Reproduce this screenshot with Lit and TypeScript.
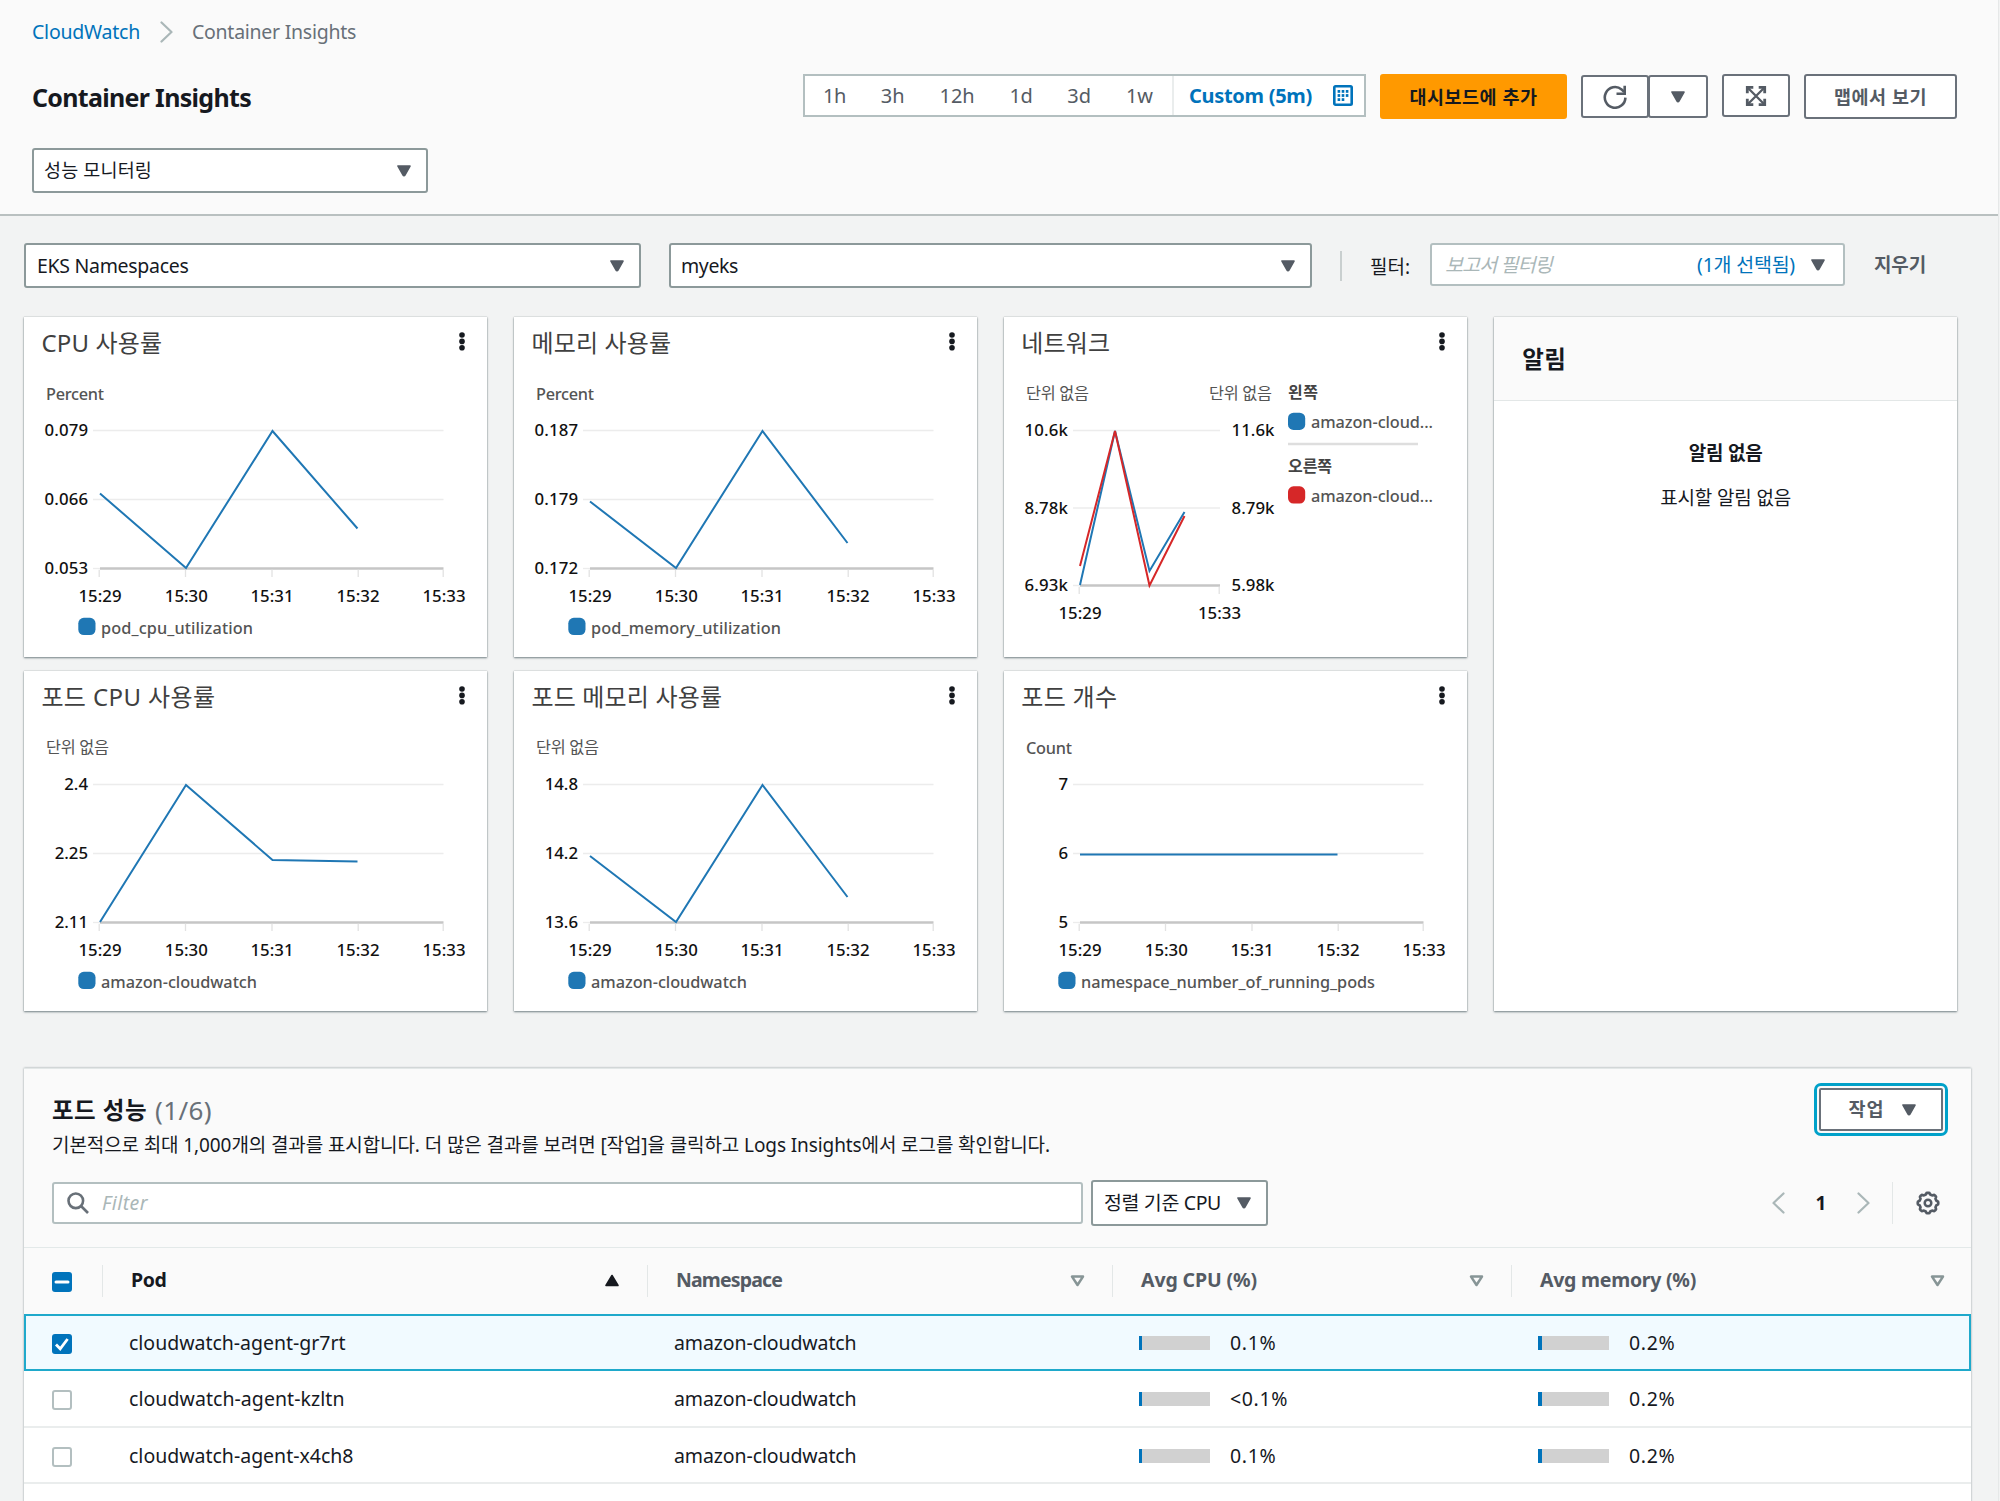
import {LitElement, html, svg, css, nothing} from "lit";
import {customElement, property} from "lit/decorators.js";
import {classMap} from "lit/directives/class-map.js";

/** One line of text whose tracking is adjusted so that it fills `w` pixels. */
@customElement("fit-text")
export class FitText extends LitElement {
  static styles = css`
    :host { display: inline-block; white-space: nowrap; flex: none; }
  `;
  @property() text = "";
  @property({type: Number}) w = 0;
  protected updated() {
    if (!this.w) return;
    const el = this.renderRoot.querySelector("span")!;
    el.style.letterSpacing = "0px";
    const natural = el.getBoundingClientRect().width;
    const gaps = this.text.length;
    el.style.letterSpacing = `${((this.w - natural) / gaps).toFixed(3)}px`;
  }
  render() {
    return html`<span>${this.text}</span>`;
  }
}

const t = (text: string, w = 0) => html`<fit-text .text=${text} .w=${w}></fit-text>`;

const caret = html`<svg class="caret" width="14" height="12" viewBox="0 0 14 12"><path d="M1 1h12L7.9 10.2a1 1 0 0 1-1.8 0z" fill="#545b64" stroke="#545b64" stroke-width="1.6" stroke-linejoin="round"/></svg>`;
const sortUp = html`<svg width="16" height="13" viewBox="0 0 16 13"><path d="M8 1.5l6 10H2z" fill="#16191f" stroke="#16191f" stroke-width="1.6" stroke-linejoin="round"/></svg>`;
const sortDown = html`<svg width="15" height="12" viewBox="0 0 15 12"><path d="M2 1.6h11L7.5 10z" fill="none" stroke="#879596" stroke-width="2.5" stroke-linejoin="round"/></svg>`;
const chevron = (d: string, w: number) => html`<svg width="13" height="22" viewBox="0 0 13 22"><path d=${d} fill="none" stroke="#aab7b8" stroke-width=${w} stroke-linecap="round" stroke-linejoin="round"/></svg>`;
const right = "M1.5 1.5L11.5 11L1.5 20.5";
const left = "M11.5 1.5L1.5 11L11.5 20.5";

const gearPath = (() => {
  const pts: string[] = [];
  for (let i = 0; i < 96; i++) {
    const a = (i / 96) * Math.PI * 2;
    const r = 9.4 + 0.85 * Math.tanh(2.2 * Math.cos(8 * a));
    pts.push(`${(12 + r * Math.cos(a)).toFixed(2)} ${(12 + r * Math.sin(a)).toFixed(2)}`);
  }
  return `M${pts.join("L")}Z`;
})();

type Pt = [number, number];
interface Series { color: string; points: Pt[]; }
interface Chart {
  title: string; titleW: number; unit: string; unitW: number;
  labels: string[]; series: Series[]; legend?: string; legendW?: number; dual?: string[];
}

const BLUE = "#1f77b4";
const RED = "#d62728";
const one = (ys: number[]): Series[] => [{color: BLUE, points: ys.map((y, i) => [76 + [0, 86, 172.5, 257.5][i], y] as Pt)}];

const charts: Chart[] = [
  {title: "CPU 사용률", titleW: 121, unit: "Percent", unitW: 58, labels: ["0.079", "0.066", "0.053"], series: one([176.5, 251, 114, 211.5]), legend: "pod_cpu_utilization", legendW: 152},
  {title: "메모리 사용률", titleW: 140, unit: "Percent", unitW: 58, labels: ["0.187", "0.179", "0.172"], series: one([184.5, 251, 114, 226]), legend: "pod_memory_utilization", legendW: 190},
  {
    title: "네트워크", titleW: 89, unit: "단위 없음", unitW: 63, labels: ["10.6k", "8.78k", "6.93k"], dual: ["11.6k", "8.79k", "5.98k"],
    series: [
      {color: BLUE, points: [[76, 268], [111, 114], [145.5, 254], [180.5, 195]]},
      {color: RED, points: [[76, 249], [111, 114], [145.5, 268.5], [180.5, 199]]},
    ],
  },
  {title: "포드 CPU 사용률", titleW: 174, unit: "단위 없음", unitW: 63, labels: ["2.4", "2.25", "2.11"], series: one([251, 114, 189, 190.5]), legend: "amazon-cloudwatch", legendW: 156},
  {title: "포드 메모리 사용률", titleW: 191, unit: "단위 없음", unitW: 63, labels: ["14.8", "14.2", "13.6"], series: one([185, 251, 114, 226]), legend: "amazon-cloudwatch", legendW: 156},
  {title: "포드 개수", titleW: 96, unit: "Count", unitW: 46, labels: ["7", "6", "5"], series: one([183.5, 183.5, 183.5, 183.5]), legend: "namespace_number_of_running_pods", legendW: 294},
];

@customElement("metric-card")
export class MetricCard extends LitElement {
  static styles = css`
    :host { display: flex; flex-direction: column; background: #fff; height: 340px; box-sizing: border-box;
      box-shadow: 0 1px 2px 0 rgba(0, 28, 36, 0.5), 0 0 1px 0 rgba(0, 28, 36, 0.3); }
    .head { display: flex; justify-content: space-between; align-items: center; height: 50px; padding: 0 22px 0 17px;
      font-size: 24px; line-height: 30px; color: #404040; }
    .head fit-text { margin-top: 2px; }
    .head svg { display: block; }
    .plot { display: block; }
    text { font-family: "Noto Sans", "Noto Sans CJK KR", sans-serif; font-size: 16.8px; font-weight: 500; fill: #111; }
    .muted { fill: #545454; font-size: 16.3px; }
    .ko { font-weight: 400; }
    .strong { fill: #444; font-size: 16px; font-weight: 700; }
  `;
  @property({attribute: false}) chart!: Chart;

  render() {
    const c = this.chart;
    const korean = c.unit === "단위 없음";
    const end = c.dual ? 216 : 419.5;
    const ys = c.dual ? [113.5, 191, 268.5] : [113.5, 182.5, 251.5];
    const base = ys[2];
    const ticks: [string, number, number][] = c.dual
      ? [["15:29", 75.2, 76], ["15:33", 215.2, 215.5]]
      : [["15:29", 75.2, 76], ["15:30", 161.5, 162.3], ["15:31", 248, 248], ["15:32", 334.2, 334], ["15:33", 419.2, 420]];
    return html`
      <div class="head">
        ${t(c.title, c.titleW)}
        <svg width="6" height="20" viewBox="0 0 6 20"><g fill="#16191f"><circle cx="3" cy="3" r="2.8"/><circle cx="3" cy="9.4" r="2.8"/><circle cx="3" cy="15.8" r="2.8"/></g></svg>
      </div>
      <svg class="plot" width="463" height="290" viewBox="0 50 463 290">
        <text class="muted ${korean ? "ko" : ""}" x="22" y=${korean ? 81.8 : 83} textLength=${c.unitW}>${c.unit}</text>
        ${ys.map((y, i) => svg`
          <line x1="69" x2=${i < 2 ? end : 76} y1=${y} y2=${y} stroke="#ececec" stroke-width="1.4"/>
          <text x="64" y=${y + 5.9} text-anchor="end" textLength=${c.labels[i].length === 5 ? 43.5 : nothing}>${c.labels[i]}</text>`)}
        <line x1="76" x2=${end} y1=${base} y2=${base} stroke="#c6c6c6" stroke-width="2.4"/>
        ${ticks.map(([label, x, cx]) => svg`
          <line x1=${x} x2=${x} y1=${base + 1.2} y2=${base + 8.5} stroke="#e2e2e2" stroke-width="1.3"/>
          <text x=${cx} y=${base + 33} text-anchor="middle" textLength="43">${label}</text>`)}
        ${c.series.map((s) => svg`<polyline points=${s.points.map((p) => p.join(",")).join(" ")} fill="none" stroke=${s.color} stroke-width="2"/>`)}
        ${c.legend ? svg`
          <rect x="54.3" y="300.8" width="17.2" height="17.2" rx="5.5" fill=${BLUE}/>
          <text class="muted" x="77" y="316.5" textLength=${c.legendW ?? nothing}>${c.legend}</text>` : nothing}
        ${c.dual ? svg`
          <text class="muted ko" x="268" y="81.8" text-anchor="end" textLength="63">단위 없음</text>
          ${ys.map((y, i) => svg`<text x="270.5" y=${y + 5.9} text-anchor="end" textLength="43">${c.dual![i]}</text>`)}
          <text class="strong" x="284" y="80.5" textLength="30">왼쪽</text>
          <rect x="284" y="95.7" width="17.2" height="17.2" rx="5.5" fill=${BLUE}/>
          <text class="muted" x="307" y="111" textLength="122">amazon-cloud...</text>
          <line x1="284" x2="414" y1="127" y2="127" stroke="#dedede" stroke-width="2.4"/>
          <text class="strong" x="284" y="154.5" textLength="44">오른쪽</text>
          <rect x="284" y="169.3" width="17.2" height="17.2" rx="5.5" fill=${RED}/>
          <text class="muted" x="307" y="184.8" textLength="122">amazon-cloud...</text>` : nothing}
      </svg>`;
  }
}

interface PodRow { pod: string; w: number; cpu: string; cpuW: number; cpuBar: number; selected: boolean; }
const rows: PodRow[] = [
  {pod: "cloudwatch-agent-gr7rt", w: 216.5, cpu: "0.1%", cpuW: 46.5, cpuBar: 2.5, selected: true},
  {pod: "cloudwatch-agent-kzltn", w: 215.5, cpu: "<0.1%", cpuW: 58, cpuBar: 2.5, selected: false},
  {pod: "cloudwatch-agent-x4ch8", w: 224.5, cpu: "0.1%", cpuW: 46.5, cpuBar: 2.5, selected: false},
];

@customElement("app-root")
export class AppRoot extends LitElement {
  static styles = css`
    :host { display: block; height: 1501px; overflow: hidden; background: #f2f3f3; color: #16191f;
      font-family: "Noto Sans", "Noto Sans CJK KR", sans-serif; font-size: 19.5px; line-height: 28px; }
    * { box-sizing: border-box; }
    svg { display: block; flex: none; }
    .page { width: 1999px; height: 1501px; border-right: 1px solid #e6e8e8; overflow: hidden; }
    .top { height: 216px; background: #fafafa; border-bottom: 2px solid #b9c0c0; padding: 0 41px 0 32px; }
    .crumbs { display: flex; align-items: center; gap: 19.5px; height: 64px; color: #687078; font-size: 19.5px; }
    .link { color: #0073bb; }
    .bar { display: flex; align-items: flex-start; margin-top: 10px; height: 45px; }
    .title { flex: 1; font-size: 25px; font-weight: 700; line-height: 46px; }
    .box { display: flex; align-items: center; background: #fff; border: 2px solid #8c999a; border-radius: 3px; height: 45px; }
    .select { justify-content: space-between; padding: 0 15px 0 11px; }
    .select.view { width: 396px; margin-top: 29px; font-size: 18.5px; padding-left: 10px; }
    .view fit-text { margin-top: -2px; }
    .range { display: flex; align-items: center; height: 43px; width: 563px; background: #fff; border: 2px solid #b3bfc0; color: #545b64; font-size: 20px; }
    .ranges { display: flex; align-items: center; gap: 34.8px; height: 100%; width: 369px; padding-left: 18px; border-right: 2px solid #eaeded; }
    .custom { display: flex; align-items: center; flex: 1; justify-content: space-between; padding: 0 11px 0 15px; color: #0073bb; font-weight: 700; }
    .btn { display: flex; align-items: center; justify-content: center; background: #fff; border: 2px solid #6a717a; border-radius: 3px; color: #545b64; font-weight: 700; font-size: 18.5px; height: 45px; }
    .primary { width: 187px; margin-left: 14px; background: #ff9900; border-color: #ff9900; color: #16191f; }
    .refresh { width: 68px; height: 43px; margin: 1px 0 0 14px; }
    .more { width: 60px; height: 43px; margin: 1px 0 0 -1px; }
    .expand { width: 68px; height: 43px; margin-left: 14px; }
    .map { width: 153px; margin-left: 14px; }
    .filters { display: flex; align-items: center; height: 45px; margin: 27px 0 0 24px; }
    .kind { width: 617px; }
    .cluster { width: 643px; margin-left: 28px; }
    .cluster.select { padding-left: 10px; }
    .rule { width: 2px; height: 30px; background: #c9cfcf; margin-left: 28px; }
    .flabel { margin: 2px 0 0 28px; width: 60px; font-size: 19px; }
    .report { width: 415px; height: 43px; border-color: #b3bfc0; padding: 0 18px 0 13px; margin-top: -2px; }
    .report fit-text { margin-top: -2px; }
    .report .link { margin-left: auto; margin-right: 16px; display: block; }
    .ph { color: #aab7b8; font-style: italic; }
    .clear { margin: -1px 0 0 29px; color: #545b64; font-weight: 700; font-size: 19px; }
    .grid { display: grid; grid-template-columns: repeat(4, 462.6px); grid-template-rows: 340px 340px; gap: 14px 27.4px; margin: 29px 0 0 24.4px; }
    .alarms { grid-column: 4; grid-row: 1 / 3; background: #fff; text-align: center;
      box-shadow: 0 1px 2px 0 rgba(0, 28, 36, 0.5), 0 0 1px 0 rgba(0, 28, 36, 0.3); }
    .alarms h2 { margin: 0 0 38px; height: 84px; background: #fafafa; border-bottom: 1px solid #e3e7e7; padding: 0 28px; text-align: left; font-size: 23.5px; line-height: 84px; }
    .alarms p { margin: 0 0 17px; font-size: 19px; }
    .alarms .none { font-weight: 700; }
    .panel { margin: 57px 0 0 24px; width: 1947px; height: 440px; background: #fff; border-top: 1px solid #e3e7e7; box-shadow: 0 0 2px 0 rgba(0, 28, 36, 0.4); }
    .phead { height: 179px; background: #fafafa; border-bottom: 1px solid #e3e9e9; padding: 18px 0 0 28px; }
    .prow { display: flex; justify-content: space-between; align-items: flex-start; height: 62px; }
    .ptitle { display: flex; gap: 8px; font-size: 23.5px; font-weight: 700; line-height: 30px; padding-top: 8px; }
    .ptitle .count { font-weight: 400; color: #687078; font-size: 26px; }
    .desc { margin-top: 6px; line-height: 28px; font-size: 19px; }
    .action { width: 124px; height: 43px; gap: 17px; margin: 1px 28px 0 0; outline: 3px solid #00a1c9; outline-offset: 2px; border-radius: 2px; padding-left: 2px; }
    .action fit-text { margin-top: -1px; }
    .tools { display: flex; align-items: center; height: 46px; margin-top: 31px; padding-right: 31px; }
    .search { width: 1031px; height: 42px; border-color: #b3bfc0; padding-left: 13px; gap: 13px; }
    .sort { width: 177px; height: 46px; margin-left: 8px; }
    .sort.select { padding: 0 15px 0 11px; }
    .sort fit-text { margin-top: -1px; }
    .pager { display: flex; align-items: center; margin: -1px 0 0 auto; font-weight: 700; font-size: 19px; }
    .pager .num { width: 72px; text-align: center; }
    .pager .sep { width: 1px; height: 42px; background: #e3e7e7; margin: 0 23px 0 22px; }
    .row { display: grid; grid-template-columns: 78px 545px 465px 399px 460px; align-items: center; height: 56.5px; border-bottom: 2px solid #eaeded; padding-top: 2px; }
    .row.head { height: 66px; background: #fafafa; font-weight: 700; color: #545b64; border: 0; padding: 0 0 1px; }
    .row.head fit-text { margin-top: -1px; }
    .row.on { background: #f1faff; border: 2px solid #1fa9cb; height: 57px; grid-template-columns: 76px 545px 465px 399px 458px; padding-top: 1px; }
    .row.on .check { padding-left: 26px; }
    .check { padding: 2px 0 0 28px; }
    .cell { padding-left: 27px; display: flex; align-items: center; }
    .head .cell { height: 32px; border-left: 1px solid #e3e7e7; padding: 0 27px 0 28px; justify-content: space-between; }
    .head .cell.last { padding-right: 26px; }
    .active { color: #16191f; }
    .meter { width: 71px; height: 14px; background: #d1d1d1; margin-right: 20px; }
    .fill { height: 14px; background: #0073bb; }
    .cbx { display: block; width: 20px; height: 20px; border: 2px solid #b3bfc0; border-radius: 3px; background: #fff; }
    .cbx.full { border: 0; background: #0073bb; }
  `;

  private checkbox(kind: "none" | "some" | "all") {
    return html`<span class=${classMap({cbx: true, full: kind !== "none"})}>
      ${kind === "some" ? html`<svg width="20" height="20"><path d="M4 10h12" stroke="#fff" stroke-width="3" stroke-linecap="round"/></svg>` : nothing}
      ${kind === "all" ? html`<svg width="20" height="20"><path d="M4 10.5l4.2 4.3L15.6 5" fill="none" stroke="#fff" stroke-width="2.8"/></svg>` : nothing}
    </span>`;
  }

  private meter(w: number) {
    return html`<div class="meter"><div class="fill" style="width:${w}px"></div></div>`;
  }

  private header() {
    const ranges: [string, number][] = [["1h", 23], ["3h", 24], ["12h", 35], ["1d", 23], ["3d", 24], ["1w", 27]];
    return html`
      <header class="top">
        <nav class="crumbs"><span class="link">${t("CloudWatch", 108)}</span>${chevron(right, 2.2)}${t("Container Insights", 164)}</nav>
        <div class="bar">
          <div class="title">${t("Container Insights", 219)}</div>
          <div class="range">
            <div class="ranges">${ranges.map(([l, w]) => t(l, w))}</div>
            <div class="custom">${t("Custom (5m)", 123)}
              <svg width="20" height="21" viewBox="0 0 20 21"><rect x="1.3" y="1.3" width="17.4" height="18.4" rx="1.2" fill="#fff" stroke="#0073bb" stroke-width="2.6"/>
                <g fill="#0073bb">${[4.6, 8.7, 12.8].map((y, r) => [4.6, 8.7, 12.8].map((x, c) => r === 2 && c === 2 ? nothing : svg`<rect x=${x} y=${y + 0.4} width="2.6" height="2.8"/>`))}</g></svg>
            </div>
          </div>
          <div class="btn primary">${t("대시보드에 추가", 128)}</div>
          <div class="btn refresh"><svg width="24" height="24" viewBox="0 0 24 24"><g fill="none" stroke="#545b64" stroke-width="2.6"><path d="M22.4 12.6A10.3 10.3 0 1 1 18.6 4.4L21 6.8"/><path d="M21.7 0.8v8h-8.2"/></g></svg></div>
          <div class="btn more">${caret}</div>
          <div class="btn expand"><svg width="22" height="22" viewBox="0 0 22 22"><g fill="none" stroke="#545b64" stroke-width="2.8"><path d="M2.3 8.3V2.3h6M13.7 2.3h6v6M19.7 13.7v6h-6M8.3 19.7h-6v-6"/><path d="M3 3l16 16M19 3L3 19" stroke-width="2.3"/></g></svg></div>
          <div class="btn map">${t("맵에서 보기", 93)}</div>
        </div>
        <div class="box select view">${t("성능 모니터링", 108)}${caret}</div>
      </header>`;
  }

  render() {
    return html`
      <div class="page">
        ${this.header()}
        <div class="filters">
          <div class="box select kind">${t("EKS Namespaces", 151.5)}${caret}</div>
          <div class="box select cluster">${t("myeks", 57)}${caret}</div>
          <div class="rule"></div>
          <div class="flabel">${t("필터:", 40)}</div>
          <div class="box report"><span class="ph">${t("보고서 필터링", 107)}</span><span class="link">${t("(1개 선택됨)", 98)}</span>${caret}</div>
          <div class="clear">${t("지우기", 52)}</div>
        </div>
        <main class="grid">
          ${charts.map((c) => html`<metric-card .chart=${c}></metric-card>`)}
          <section class="alarms">
            <h2>${t("알림", 44)}</h2>
            <p class="none">${t("알림 없음", 74)}</p>
            <p>${t("표시할 알림 없음", 131)}</p>
          </section>
        </main>
        <section class="panel">
          <div class="phead">
            <div class="prow">
              <div>
                <div class="ptitle">${t("포드 성능", 95)}<span class="count">${t("(1/6)", 57)}</span></div>
                <div class="desc">${t("기본적으로 최대 1,000개의 결과를 표시합니다. 더 많은 결과를 보려면 [작업]을 클릭하고 Logs Insights에서 로그를 확인합니다.", 998)}</div>
              </div>
              <div class="btn action">${t("작업", 36)}${caret}</div>
            </div>
            <div class="tools">
              <div class="box search">
                <svg width="22" height="22" viewBox="0 0 22 22"><g fill="none" stroke="#687078" stroke-width="2.6"><circle cx="8.8" cy="8.8" r="7.3"/><path d="M14 14l7 7"/></g></svg>
                <span class="ph">${t("Filter", 46)}</span>
              </div>
              <div class="box select sort">${t("정렬 기준 CPU", 117)}${caret}</div>
              <div class="pager">
                ${chevron(left, 2.2)}<span class="num">1</span>${chevron(right, 2.2)}
                <span class="sep"></span>
                <svg width="24" height="24" viewBox="0 0 24 24"><g fill="none" stroke="#545b64"><path d=${gearPath} stroke-width="2.7"/><circle cx="12" cy="12" r="3.3" stroke-width="2.5"/></g></svg>
              </div>
            </div>
          </div>
          <div class="row head">
            <div class="check">${this.checkbox("some")}</div>
            <div class="cell active">${t("Pod", 35.5)}${sortUp}</div>
            <div class="cell">${t("Namespace", 106)}${sortDown}</div>
            <div class="cell">${t("Avg CPU (%)", 116)}${sortDown}</div>
            <div class="cell last">${t("Avg memory (%)", 156)}${sortDown}</div>
          </div>
          ${rows.map((r) => html`
            <div class=${classMap({row: true, on: r.selected})}>
              <div class="check">${this.checkbox(r.selected ? "all" : "none")}</div>
              <div class="cell">${t(r.pod, r.w)}</div>
              <div class="cell">${t("amazon-cloudwatch", 182.5)}</div>
              <div class="cell">${this.meter(r.cpuBar)}${t(r.cpu, r.cpuW)}</div>
              <div class="cell">${this.meter(4)}${t("0.2%", 46.5)}</div>
            </div>`)}
        </section>
      </div>`;
  }
}
